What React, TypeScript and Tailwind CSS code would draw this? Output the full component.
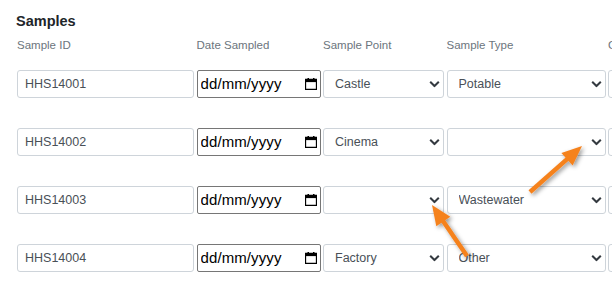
import React from "react";

type Row = { id: string; point: string; type: string };

const rows: Row[] = [
  { id: "HHS14001", point: "Castle", type: "Potable" },
  { id: "HHS14002", point: "Cinema", type: "" },
  { id: "HHS14003", point: "", type: "Wastewater" },
  { id: "HHS14004", point: "Factory", type: "Other" },
];

const pointOptions = ["", "Castle", "Cinema", "Factory"];
const typeOptions = ["", "Potable", "Wastewater", "Other"];

const cols = "grid grid-cols-[177px_124px_121px_159px_160px] gap-x-[2.5px]";

function Select({ value, options }: { value: string; options: string[] }) {
  return (
    <div className="relative h-[28px]">
      <select
        defaultValue={value}
        className="h-full w-full appearance-none rounded-[3px] border border-[#ced4da] bg-white pl-[11px] pr-6 text-[12.5px] text-[#495057] outline-none"
      >
        {options.map((o) => (
          <option key={o} value={o}>
            {o}
          </option>
        ))}
      </select>
      <svg
        className="pointer-events-none absolute right-[4px] top-1/2 -translate-y-1/2"
        width="11"
        height="7"
        viewBox="0 0 11 7"
      >
        <path d="M1.2 1.2l4.3 4.3 4.3-4.3" fill="none" stroke="#343a40" strokeWidth="2" />
      </svg>
    </div>
  );
}

// locale-independent stand-in for the native date field (dd/mm/yyyy)
function DateField() {
  return (
    <div className="flex h-[28px] items-center justify-between rounded-[2px] border border-[#767676] bg-white pl-[3px] pr-[3px]">
      <input
        readOnly
        placeholder="dd/mm/yyyy"
        className="w-[90px] bg-transparent text-[15px] tracking-[0.1px] text-black outline-none placeholder:text-black"
      />
      <svg width="12" height="12" viewBox="0 0 12 12">
        <rect x="2.5" y="0" width="1.5" height="2" fill="#000" />
        <rect x="8" y="0" width="1.5" height="2" fill="#000" />
        <path d="M0.5 1.5h11v10h-11z" fill="none" stroke="#000" strokeWidth="1.3" />
        <rect x="0.5" y="1.5" width="11" height="2.6" fill="#000" />
      </svg>
    </div>
  );
}

function Arrow({ x1, y1, x2, y2 }: { x1: number; y1: number; x2: number; y2: number }) {
  const dx = x2 - x1;
  const dy = y2 - y1;
  const len = Math.hypot(dx, dy);
  const ux = dx / len;
  const uy = dy / len;
  const px = -uy;
  const py = ux;
  const bx = x2 - ux * 20;
  const by = y2 - uy * 20;
  const head = `${x2},${y2} ${bx + px * 8.5},${by + py * 8.5} ${bx - px * 8.5},${by - py * 8.5}`;
  return (
    <g filter="url(#shadow)">
      <line x1={x1} y1={y1} x2={bx + ux * 2} y2={by + uy * 2} stroke="#f5821f" strokeWidth="4.5" />
      <polygon points={head} fill="#f5821f" />
    </g>
  );
}

export default function App() {
  return (
    <div
      className="relative h-[288px] w-[612px] overflow-hidden bg-white"
      style={{ fontFamily: '"Liberation Sans", Arial, sans-serif' }}
    >
      <div className="pl-[16px] pt-[12px]">
        <h2 className="text-[14.5px] font-bold leading-[18px] text-[#212529]">Samples</h2>
        <div className={`${cols} ml-[1px] mt-[8px] text-[11.5px] leading-[14px] text-[#6c757d]`}>
          <span>Sample ID</span>
          <span>Date Sampled</span>
          <span>Sample Point</span>
          <span>Sample Type</span>
          <span>Comments</span>
        </div>
        <div className="ml-[1px] mt-[18px] flex flex-col gap-[30px]">
          {rows.map((r) => (
            <div key={r.id} className={cols}>
              <input
                defaultValue={r.id}
                className="h-[28px] rounded-[3px] border border-[#ced4da] bg-white px-[7px] text-[12.5px] text-[#495057] outline-none"
              />
              <DateField />
              <Select value={r.point} options={pointOptions} />
              <Select value={r.type} options={typeOptions} />
              <input className="h-[28px] rounded-[3px] border border-[#ced4da] bg-white" />
            </div>
          ))}
        </div>
      </div>
      <svg className="pointer-events-none absolute inset-0" width="612" height="288">
        <defs>
          <filter id="shadow" x="-30%" y="-30%" width="160%" height="160%">
            <feDropShadow dx="2" dy="2" stdDeviation="2" floodColor="#000" floodOpacity="0.4" />
          </filter>
        </defs>
        <Arrow x1={530} y1={192} x2={582} y2={146} />
        <Arrow x1={467} y1={256} x2={432} y2={205} />
      </svg>
    </div>
  );
}
